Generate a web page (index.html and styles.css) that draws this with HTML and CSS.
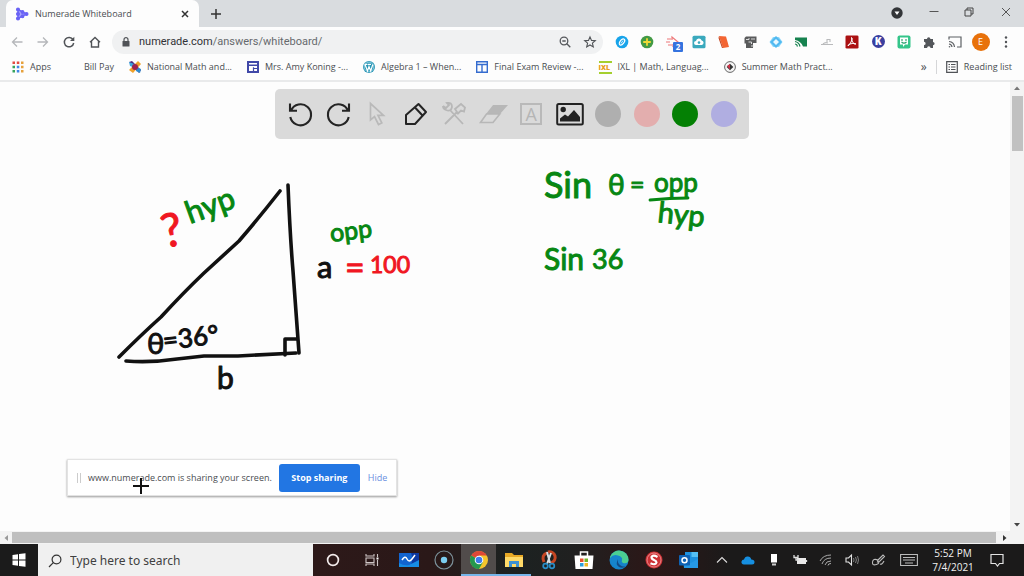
FILE: index.html
```html
<!DOCTYPE html>
<html lang="en">
<head>
<meta charset="utf-8">
<title>Numerade Whiteboard</title>
<link rel="stylesheet" href="styles.css">
</head>
<body>
<header class="browser">
  <div class="tabstrip">
    <div class="tab">
      <svg class="i14" viewBox="0 0 14 14"><g stroke="#6a63f5" stroke-width="1.5" fill="#6a63f5"><path d="M3 2.500 3 11.500 11.500 7Z" fill="#a9a5fb"/><circle cx="3" cy="2.500" r="1.300"/><circle cx="3" cy="7" r="1.300"/><circle cx="3" cy="11.500" r="1.300"/><circle cx="7.500" cy="5" r="1.200"/><circle cx="7.500" cy="9.300" r="1.200"/><circle cx="11.500" cy="7" r="1.300"/></g></svg>
      <span class="tab-title">Numerade Whiteboard</span>
      <button class="plain" aria-label="Close tab"><svg class="i10" viewBox="0 0 10 10"><path d="M2 2 8 8M8 2 2 8" stroke="#333" stroke-width="1.500"/></svg></button>
    </div>
    <button class="plain newtab" aria-label="New tab"><svg class="i10" viewBox="0 0 10 10"><path d="M5 0V10M0 5H10" stroke="#333" stroke-width="1.500"/></svg></button>
    <div class="window-controls">
      <button class="plain" aria-label="Tab search"><svg class="i12" viewBox="0 0 12 12"><circle cx="5" cy="7" r="5.700" fill="#333538"/><path d="M2.500 5.500h5L5 9Z" fill="#fff"/></svg></button>
      <button class="plain" aria-label="Minimize"><svg class="i10" viewBox="0 0 10 10"><path d="M.5 4.500H9.500" stroke="#555"/></svg></button>
      <button class="plain" aria-label="Restore"><svg class="i10" viewBox="0 0 10 10"><path d="M0 3h6v6H0ZM2 3V1h6v6H6" fill="none" stroke="#444"/></svg></button>
      <button class="plain" aria-label="Close"><svg class="i10" viewBox="0 0 10 10"><path d="M1 1 9 9M9 1 1 9" stroke="#555"/></svg></button>
    </div>
  </div>
  <div class="navbar">
    <div class="nav-buttons">
      <button class="plain" aria-label="Back"><svg class="i12" viewBox="0 0 12 12"><path d="M11.500 6H1.500M6 1.500 1.500 6 6 10.500" fill="none" stroke="#b5b7ba" stroke-width="1.300"/></svg></button>
      <button class="plain" aria-label="Forward"><svg class="i12" viewBox="0 0 12 12"><path d="M.5 6h10M6 1.500 10.500 6 6 10.500" fill="none" stroke="#b5b7ba" stroke-width="1.300"/></svg></button>
      <button class="plain" aria-label="Reload"><svg class="i12" viewBox="0 0 12 12"><path d="M10 3.500A4.700 4.700 0 1 0 10.700 7" fill="none" stroke="#505357" stroke-width="1.500"/><path d="M11.300.7V5H7Z" fill="#505357"/></svg></button>
      <button class="plain" aria-label="Home"><svg class="i12" viewBox="0 0 12 12"><path d="M1 6.300 6 1.500l5 4.800M2.500 5.300V11h7V5.300" fill="none" stroke="#505357" stroke-width="1.400"/></svg></button>
    </div>
    <div class="address">
      <svg class="i10" viewBox="0 0 10 10"><rect x="1.500" y="4" width="7" height="5.500" rx=".6" fill="#505357"/><path d="M3 4V2.700a2 2 0 0 1 4 0V4" fill="none" stroke="#505357" stroke-width="1.200"/></svg>
      <a class="url" href="#">numerade.com<span class="path">/answers/whiteboard/</span></a>
      <button class="plain" aria-label="Zoom"><svg class="i12" viewBox="0 0 12 12"><circle cx="5" cy="5" r="3.800" fill="none" stroke="#55585c" stroke-width="1.300"/><path d="M3.300 5h3.400M7.800 7.800l3.500 3.500" stroke="#55585c" stroke-width="1.300"/></svg></button>
      <button class="plain" aria-label="Bookmark"><svg class="i12" viewBox="0 0 12 12"><path d="M6 .9 7.500 4.400l3.800.3-2.900 2.500.9 3.700L6 9 2.700 10.900l.9-3.700L.7 4.700l3.800-.3Z" fill="none" stroke="#505357" stroke-width="1.100"/></svg></button>
    </div>
    <div class="extensions">
      <svg class="i14" viewBox="0 0 14 14"><circle cx="7" cy="7" r="6.300" fill="#18a4ea"/><ellipse cx="7" cy="7" rx="2" ry="3.600" transform="rotate(38 7 7)" fill="none" stroke="#fff" stroke-width="1.200"/><path d="M6 8.500 8 5.500" stroke="#d7f2ff"/></svg>
      <svg class="i14" viewBox="0 0 14 14"><circle cx="7" cy="7" r="6.300" fill="#439a45"/><path d="M7 3.200v7.600M3.200 7h7.600" stroke="#f0d934" stroke-width="1.800"/></svg>
      <span class="badged"><svg class="i14" viewBox="0 0 14 14"><path d="M1 4h4M0 7h4M2 10h4M6 5V2l6 5-5 4V9" fill="none" stroke="#ee7778" stroke-width="1.200"/></svg><span class="badge">2</span></span>
      <svg class="i14" viewBox="0 0 14 14"><rect x=".5" y=".7" width="13" height="12.600" rx="1.500" fill="#3aa9bd"/><path d="M4 10a2 2 0 0 1 0-4 3 3 0 0 1 5.700-.6A2.400 2.400 0 0 1 10 10Z" fill="#fff"/><circle cx="7" cy="7.600" r="1.300" fill="#3aa9bd"/></svg>
      <svg class="i14" viewBox="0 0 14 14"><path d="M2 1 9 1.500 12 12 6 13Z" fill="#f36532"/><path d="M2 1 6 13 5 13 1.500 3Z" fill="#c6421b"/></svg>
      <svg class="i14" viewBox="0 0 14 14"><path d="M3 1.500h10.500v6.500H10v5H3V8.500H1.500V3Z" fill="#5a5b5c"/><path d="M3 4.500h3V3M8 4h4M5.500 7h3v2M8 11h3" stroke="#e8e8e8" stroke-width=".9" fill="none"/></svg>
      <svg class="i14" viewBox="0 0 14 14"><path d="M4 2h6l3.500 5L10 12H4L.5 7Z" fill="#8bd7fb"/><path d="M7 1l6 6-6 6-6-6Z" fill="#51b9f0"/><path d="M7 4l3 3-3 3-3-3Z" fill="#e9f8ff"/></svg>
      <svg class="i14" viewBox="0 0 14 14"><path d="M1 2.500h12v9H9Q7 6 1 5Z" fill="#16824f"/><path d="M1 6.500q4 .7 5 5M1 9q2 .2 2.500 2.500" stroke="#16824f" stroke-width="1.200" fill="none"/></svg>
      <svg class="i14" viewBox="0 0 14 14"><path d="M1 9.500h12M3 9q2-2 5-1M7 7V4.500h3V7" fill="none" stroke="#b9babc" stroke-width="1.100"/></svg>
      <svg class="i14" viewBox="0 0 14 14"><rect x=".5" y=".5" width="13" height="13" rx="1.300" fill="#ab1112"/><path d="M6.500 2.500q1 0 .4 2.500Q6 8 3.200 11q-1-.6 1.500-1.900Q8 7.800 11 8.800q-.5 1-2.200-.2Q6.400 6.500 6.500 2.500" fill="none" stroke="#fff"/></svg>
      <span class="round k-badge">K</span>
      <svg class="i14" viewBox="0 0 14 14"><rect x=".5" y=".5" width="13" height="13" rx="2" fill="#35c58a"/><path d="M3 2.500h8v7H8L6 12V9.500H3Z" fill="#fff"/><path d="M5 4v2M9 4v2M4.500 7q2.500 2.300 5 0" stroke="#249e6b" stroke-width="1.100" fill="none"/></svg>
      <svg class="i14" viewBox="0 0 14 14"><path d="M2 4h3a1.700 1.700 0 1 1 3.400 0H11v3a1.600 1.600 0 1 1 0 3.200V13H8.500a1.700 1.700 0 0 0-3.400 0H2v-3a1.600 1.600 0 0 0 0-3.200Z" fill="#54575b"/></svg>
      <svg class="i14" viewBox="0 0 14 14"><path d="M1 4.500V2h12v10H9M1 6.500q5 .5 5.500 5.500M1 9q2.600.3 3 3" fill="none" stroke="#5d6064" stroke-width="1.200"/><circle cx="1.500" cy="11.800" r=".8" fill="#5d6064"/></svg>
      <button class="plain round avatar">E</button>
      <button class="plain" aria-label="Menu"><svg class="i14" viewBox="0 0 14 14" fill="#505357"><circle cx="7" cy="2.500" r="1.200"/><circle cx="7" cy="7" r="1.200"/><circle cx="7" cy="11.500" r="1.200"/></svg></button>
    </div>
  </div>
  <nav class="bookmarks">
    <a class="bm apps" href="#"><svg class="i12" viewBox="0 0 12 12"><path d="M.5.500h2.500v2.500H.5ZM4.800.500h2.500v2.500H4.800Z" fill="#e34b42"/><path d="M9 .500h2.500v2.500H9ZM9 4.800h2.500v2.500H9Z" fill="#e6a13c"/><path d="M.5 4.800h2.500v2.500H.5ZM.5 9h2.500v2.500H.5Z" fill="#38a35c"/><path d="M4.800 4.800h2.500v2.500H4.800ZM4.800 9h2.500v2.500H4.800Z" fill="#4187e8"/><path d="M9 9h2.500v2.500H9Z" fill="#e6a13c"/></svg><span>Apps</span></a>
    <a class="bm bill" href="#"><span>Bill Pay</span></a>
    <a class="bm" href="#"><svg class="i12" viewBox="0 0 12 12"><path d="M0 1 3 0 12 9 10 12Z" fill="#4b2e83"/><path d="M9 0 12 3 4 12 0 9Z" fill="#f0a22b"/><path d="M0 1 5 3 6 7 1 5Z" fill="#39a6e0"/><path d="M7 6 12 8 11 12 7 10Z" fill="#2e8cd0"/><circle cx="6" cy="6" r="3" fill="#9c2350"/></svg><span>National Math and...</span></a>
    <a class="bm" href="#"><svg class="i12" viewBox="0 0 12 12"><rect width="12" height="12" fill="#4048a8"/><path d="M2 2h8v1.500H2ZM2 5h8v5H2Z" fill="#fff"/><path d="M6.500 6.300V10M6.500 7.500H10" stroke="#4048a8" stroke-width="1.200"/></svg><span>Mrs. Amy Koning -...</span></a>
    <a class="bm" href="#"><svg class="i12" viewBox="0 0 12 12"><circle cx="6" cy="6" r="6" fill="#2795b5"/><circle cx="6" cy="6" r="4.800" fill="none" stroke="#bfe6f0" stroke-width=".6"/><path d="M2 3.500 4.500 10 6 5.500 7.700 10 9.800 3.500M1.500 3.300h3M5 3.300h3" fill="none" stroke="#fff" stroke-width="1.200"/></svg><span>Algebra 1 – When...</span></a>
    <a class="bm" href="#"><svg class="i12" viewBox="0 0 12 12"><path d="M.7.700h10.600v10.600H.7ZM.7 3.500h10.600M6 3.500V11" fill="none" stroke="#356ccf" stroke-width="1.400"/></svg><span>Final Exam Review -...</span></a>
    <a class="bm" href="#"><span class="ixl">IXL</span><span>IXL | Math, Languag...</span></a>
    <a class="bm" href="#"><svg class="i12" viewBox="0 0 12 12"><circle cx="6" cy="6" r="5.400" fill="#f5f5f5" stroke="#666"/><path d="M6 2.700 9.300 6 6 9.300 2.700 6Z" fill="#333"/><path d="M3 5 6 3v5.500Z" fill="#ce3349"/></svg><span>Summer Math Pract...</span></a>
    <button class="plain more">»</button>
    <a class="bm reading" href="#"><svg class="i12" viewBox="0 0 12 12"><path d="M.7.700h10.600v10.600H.7ZM2.500 3.500h1.500M5 3.500h4.500M2.500 6h1.500M5 6h4.500M2.500 8.500h1.500M5 8.500h4.500" fill="none" stroke="#505357" stroke-width="1.200"/></svg><span>Reading list</span></a>
  </nav>
</header>

<main class="viewport">
  <section class="stage">
    <div class="tools">
      <button class="plain" aria-label="Undo"><svg class="i26" viewBox="0 0 26 26"><path d="M4 9.500A10.500 10.500 0 1 1 3.300 16M3 2.500v7.200h7" fill="none" stroke="#242424" stroke-width="2.100"/></svg></button>
      <button class="plain" aria-label="Redo"><svg class="i26" viewBox="0 0 26 26"><path d="M22 9.500A10.500 10.500 0 1 0 22.700 16M23 2.500v7.200h-7" fill="none" stroke="#242424" stroke-width="2.100"/></svg></button>
      <button class="plain" aria-label="Select"><svg class="i26" viewBox="0 0 26 26"><path d="M6.500 2.500V19l4-3.500 4 8 3.300-1.600-3.800-7.600h5.500Z" fill="none" stroke="#b9b9b9" stroke-width="1.700"/></svg></button>
      <button class="plain" aria-label="Pen"><svg class="i26" viewBox="0 0 26 26"><path d="M3 23v-9L15.500 3 23 11 12 23ZM12 6.500 19.500 14.500" fill="none" stroke="#242424" stroke-width="2" stroke-linejoin="round"/></svg></button>
      <button class="plain" aria-label="Tools"><svg class="i26" viewBox="0 0 26 26"><path d="M4 23 16 11M14 8l6-5 4 3.500-1 4-3-1-3 3ZM8.500 8.500 22 23M2 5l3 2 3-3-2-2q5-1 5 4-1 5-6 3-3-1-3-4" fill="none" stroke="#b7b7b7" stroke-width="1.800"/></svg></button>
      <button class="plain" aria-label="Eraser"><svg class="i26" viewBox="0 0 26 26"><path d="M13 4h15l-8 9H6Z" fill="#b7b7b7"/><path d="M6.500 13h13.300L13 21.500H.5Z" fill="none" stroke="#b7b7b7" stroke-width="1.600"/></svg></button>
      <button class="plain" aria-label="Text"><span class="letter-box">A</span></button>
      <button class="plain" aria-label="Image"><svg class="i28" viewBox="0 0 28 26"><rect x="1.200" y="3" width="25.600" height="20.500" rx="1.500" fill="none" stroke="#222" stroke-width="2"/><circle cx="7.200" cy="8.500" r="2.700" fill="#222"/><path d="M4 20.500v-3l5-4 3 2 6-6.500 6 7v4.500Z" fill="#222"/></svg></button>
      <button class="plain" aria-label="Gray"><span class="swatch gray"></span></button>
      <button class="plain" aria-label="Pink"><span class="swatch pink"></span></button>
      <button class="plain" aria-label="Green"><span class="swatch green"></span></button>
      <button class="plain" aria-label="Violet"><span class="swatch violet"></span></button>
    </div>
    <svg class="board" viewBox="0 139 1010 320" preserveAspectRatio="xMinYMin meet">
      <g fill="none" stroke="#111" stroke-width="3.600" stroke-linecap="round" stroke-linejoin="round">
        <path d="M280 191 Q258 219 239 241 L204 273 Q184 292 161 317 Q141 335 119 357"/>
        <path d="M288 185 Q290 235 293 271 L299 353"/>
        <path d="M126 361 Q150 363 177 359 L204 356 238 356 296 353"/>
        <path d="M285 355V339H297"/>
      </g>
      <g class="ink red">
        <text x="165" y="248" font-size="46" transform="rotate(-12 165 248)">?</text>
        <text x="345" y="280" font-size="34">=</text>
        <text x="370" y="273" font-size="23">100</text>
      </g>
      <g class="ink green-ink">
        <text x="190" y="224" font-size="31" transform="rotate(-20 190 224)">hyp</text>
        <text x="331" y="242" font-size="25" transform="rotate(-7 331 242)">opp</text>
        <text x="544" y="198" font-size="36">Sin</text>
        <text x="608" y="195" font-size="28">θ</text>
        <text x="630" y="194" font-size="25">=</text>
        <text x="654" y="192" font-size="26">opp</text>
        <text x="657" y="222" font-size="29" transform="rotate(6 657 222)">hyp</text>
        <text x="544" y="270" font-size="30">Sin</text>
        <text x="592" y="269" font-size="27">36</text>
      </g>
      <path d="M650 200Q670 198 688 198" fill="none" stroke="#078713" stroke-width="2.800" stroke-linecap="round"/>
      <g class="ink">
        <text x="317" y="278" font-size="31">a</text>
        <text x="147" y="354" font-size="29">θ</text>
        <text x="164" y="350" font-size="26" transform="rotate(-7 164 350)">=36°</text>
        <text x="217" y="389" font-size="30">b</text>
      </g>
    </svg>
    <div class="share">
      <span class="grip"></span>
      <span class="share-text">www.numerade.com is sharing your screen.</span>
      <button class="stop">Stop sharing</button>
      <a class="hide" href="#">Hide</a>
      <svg class="cursor" viewBox="0 0 16 16"><path d="M8 0V16M0 8H16" stroke="#111" stroke-width="2"/></svg>
    </div>
  </section>
  <div class="vscroll"><svg class="arrow" viewBox="0 0 12 12"><path d="M3 8 6 4.500 9 8Z" fill="#777"/></svg><div class="vthumb"></div><svg class="arrow end" viewBox="0 0 12 12"><path d="M3 4 6 7.500 9 4Z" fill="#444"/></svg></div>
</main>
<div class="hscroll"><svg class="arrow" viewBox="0 0 12 12"><path d="M8 3 4.500 6 8 9Z" fill="#999"/></svg><div class="hthumb"></div><svg class="arrow" viewBox="0 0 12 12"><path d="M4 3 7.500 6 4 9Z" fill="#333"/></svg></div>

<footer class="taskbar">
  <button class="plain start" aria-label="Start"><svg class="i14" viewBox="0 0 14 14" fill="#fff"><path d="M.5 2 6 1.200V6.500H.5ZM7 1 13.500.2V6.500H7ZM.5 7.500H6v5.300L.5 12ZM7 7.500h6.500v6.300L7 13Z"/></svg></button>
  <label class="search"><svg class="i14" viewBox="0 0 14 14"><circle cx="8.500" cy="5.500" r="4.400" fill="none" stroke="#333" stroke-width="1.200"/><path d="M5.300 8.700 1 13" stroke="#333" stroke-width="1.200"/></svg><input type="text" placeholder="Type here to search" aria-label="Type here to search"></label>
  <div class="system">
    <button class="plain" aria-label="Cortana"><svg class="i14" viewBox="0 0 14 14"><circle cx="7" cy="7" r="5.400" fill="none" stroke="#f2eaea" stroke-width="1.700"/></svg></button>
    <button class="plain" aria-label="Task view"><svg class="i14" viewBox="0 0 14 14"><path d="M1 1v2h8V1M1 13v-2h8v2M1 5h8v4.500H1ZM12.500 1v3M12.500 7v6" fill="none" stroke="#cfc6c6" stroke-width="1.100"/><path d="M11.500 4.500h2v2h-2Z" fill="#fff"/></svg></button>
  </div>
  <div class="apps-row">
    <button class="plain" aria-label="Whiteboard"><svg class="i20" viewBox="0 0 20 20"><rect y="3" width="20" height="14" fill="#1264cf"/><path d="M12 3h8v14h-9q4-7 1-14" fill="#0d38a0"/><path d="M0 13q5 3 10 2l10-5v7H0Z" fill="#178ce4"/><path d="M3 10q3-5 5-1t5 0l3-4" fill="none" stroke="#fff" stroke-width="1.500"/></svg></button>
    <button class="plain" aria-label="Recorder"><svg class="i20" viewBox="0 0 20 20"><circle cx="10" cy="10" r="9" fill="none" stroke="#7c929b" stroke-width="1.200"/><circle cx="10" cy="10" r="3.200" fill="#7ccdf0"/></svg></button>
    <button class="plain active" aria-label="Chrome"><svg class="i20" viewBox="0 0 20 20"><circle cx="10" cy="10" r="9" fill="#f4c52d"/><path d="M10 10 2.200 5.500A9 9 0 0 1 17.800 5.500H10Z" fill="#de4837"/><path d="M10 10 2.200 5.500A9 9 0 0 0 10 19l4-7Z" fill="#25984e"/><circle cx="10" cy="10" r="4.300" fill="#fff"/><circle cx="10" cy="10" r="3.300" fill="#3e7bec"/></svg></button>
    <button class="plain running" aria-label="File Explorer"><svg class="i20" viewBox="0 0 20 20"><path d="M1 3h7l2 2h9v12H1Z" fill="#e8a925"/><path d="M1 7h18v10H1Z" fill="#ffda68"/><path d="M5 11h10v6h-3v-3H8v3H5Z" fill="#3d91d3"/></svg></button>
    <button class="plain" aria-label="Snip"><svg class="i20" viewBox="0 0 20 20"><path d="M9 2a5.500 5.500 0 0 1 3 11M8 3Q2 5 5 12" fill="none" stroke="#c64623" stroke-width="3"/><path d="M8 2 11 13M12 3 8 14" stroke="#d9dfe3" stroke-width="2"/><circle cx="6.500" cy="16" r="2.300" fill="none" stroke="#298dc7" stroke-width="1.700"/><circle cx="13" cy="16" r="2.300" fill="none" stroke="#298dc7" stroke-width="1.700"/></svg></button>
    <button class="plain" aria-label="Store"><svg class="i20" viewBox="0 0 20 20"><path d="M6.500 6V2h7v4" fill="none" stroke="#fff" stroke-width="1.500"/><path d="M.5 5.500h19L18.500 19h-17Z" fill="#fff"/><path d="M6 8.500h3.500V12H6Z" fill="#e8502d"/><path d="M10.500 8.500H14V12h-3.500Z" fill="#72b52b"/><path d="M6 13h3.500v3.500H6Z" fill="#2b9fdc"/><path d="M10.500 13H14v3.500h-3.500Z" fill="#efb727"/></svg></button>
    <button class="plain" aria-label="Edge"><svg class="i20" viewBox="0 0 20 20"><circle cx="10" cy="10" r="9.500" fill="#1683ca"/><path d="M1 7A9.500 9.500 0 0 1 19.500 10q-.5 4-5.500 3-2-1-1-3-1-4-6-3.500Q3 7 1 11Z" fill="#4bcf92"/><path d="M1 8Q4 4 9 5.500T13 10q-4-1.500-4.500 2 .5 5 8 4A9.500 9.500 0 0 1 1 8Z" fill="#1685cd"/><path d="M9 9Q6 14 10 17q4 2 7-1-3 1.500-6-1T9 9Z" fill="#124b86"/></svg></button>
    <button class="plain" aria-label="Snagit"><svg class="i20" viewBox="0 0 20 20"><circle cx="10" cy="10" r="8.500" fill="#cb3135"/><circle cx="10" cy="10" r="7" fill="none" stroke="#ed8587"/><path d="M13.500 7q-4.500-2.500-6 0 0 2 2.500 3t2.500 2.500q-1 3-6 .8" fill="none" stroke="#fff" stroke-width="2.200"/></svg></button>
    <button class="plain" aria-label="Outlook"><svg class="i20" viewBox="0 0 20 20"><path d="M6 2h13v11H6Z" fill="#1d91df"/><path d="M12.500 2H19v5h-6.500Z" fill="#54c0f5"/><path d="M4 9l8 4 7-4v9H5Z" fill="#2699e6"/><rect y="5" width="11" height="10.500" rx="1" fill="#0f62b4"/><circle cx="5.500" cy="10.200" r="2.500" fill="none" stroke="#fff" stroke-width="1.500"/></svg></button>
  </div>
  <div class="tray">
    <button class="plain" aria-label="Show hidden icons"><svg class="i14" viewBox="0 0 14 14"><path d="M2 9.500 7 4.500l5 5" fill="none" stroke="#ddd" stroke-width="1.100"/></svg></button>
    <svg class="i14" viewBox="0 0 14 14"><path d="M3 11.500Q0 11 .5 8.500 1 6.500 3 6.500 4 3 7 3.500q2.500 0 3.300 3 3.200 0 3.200 2.500t-2.500 2.500Z" fill="#168fe0"/></svg>
    <svg class="i14" viewBox="0 0 14 14"><path d="M4 1h6v8.500H4Z" fill="#fff"/><path d="M5 10.500h4v2H5Z" fill="#ccc"/></svg>
    <svg class="i14" viewBox="0 0 14 14"><path d="M4 5h9v6H4Z" fill="#e9e9e9"/><path d="M1 2v2.500h4V2M3 4.500V7h3M13.500 7v2" fill="none" stroke="#ddd" stroke-width="1.300"/></svg>
    <svg class="i14" viewBox="0 0 14 14"><g fill="none" stroke="#aaa"><path d="M1 8Q4 2 12 2M3 11Q5 5 12 5M6 12Q7 8 12 8"/><path d="M9 12.500q0-2 3-2"/></g></svg>
    <svg class="i14" viewBox="0 0 14 14"><path d="M1 5h2.500L6.500 2v10L3.500 9H1Z" fill="none" stroke="#e2e2e2" stroke-width="1.100"/><path d="M8.500 5q1 2 0 4M10.500 4q1.800 3 0 6M12.500 3q2 4 0 8" fill="none" stroke="#999" stroke-width=".8"/></svg>
    <svg class="i14" viewBox="0 0 14 14"><path d="M7 7l5-5 1.500 1.500-5 5-2 .5ZM7 7Q2 5 1.500 9t4 2.500T6 7M9 11q2 1 4-3" fill="none" stroke="#bbb" stroke-width="1.100"/></svg>
    <svg class="i18" viewBox="0 0 18 14"><path d="M.6 1.500h16.800v11H.6ZM3 4.500h12M3 7h12M5 10h8" fill="none" stroke="#bbb" stroke-width="1.100"/></svg>
    <div class="clock"><span>5:52 PM</span><span>7/4/2021</span></div>
    <button class="plain note" aria-label="Notifications"><svg class="i14" viewBox="0 0 14 14"><path d="M1 1.500h12v9H9.500L7.500 13 5.500 10.500H1Z" fill="none" stroke="#e4e4e4" stroke-width="1.200"/></svg></button>
  </div>
</footer>
</body>
</html>
```
FILE: styles.css
```css
* { box-sizing: border-box; }
body {
  margin: 0;
  min-height: 100vh;
  display: flex;
  flex-direction: column;
  background: #fdfdfd;
  font-family: "Open Sans", "Noto Sans", sans-serif;
  font-size: 9px;
  line-height: 14px;
  color: #4a4d51;
}
a { color: inherit; text-decoration: none; }
svg { display: block; flex: none; overflow: visible; }
.plain {
  display: flex;
  align-items: center;
  justify-content: center;
  padding: 0;
  border: 0;
  background: none;
  font: inherit;
  color: inherit;
}
.i10 { width: 10px; height: 10px; }
.i12 { width: 12px; height: 12px; }
.i14 { width: 14px; height: 14px; }
.i18 { width: 18px; height: 14px; }
.i20 { width: 20px; height: 20px; }
.i26 { width: 26px; height: 26px; }
.i28 { width: 28px; height: 26px; }

/* Browser frame */
.tabstrip { display: flex; height: 27px; background: #d9dcdf; }
.tab {
  display: flex;
  align-items: center;
  gap: 6px;
  width: 193px;
  margin-left: 6px;
  padding: 0 9px;
  border-radius: 7px 7px 0 0;
  background: #fdfdfd;
}
.tab-title { flex: 1; white-space: nowrap; }
.newtab { margin-left: 12px; }
.window-controls {
  display: grid;
  grid-template-columns: repeat(4, 36px);
  margin-left: auto;
  padding-bottom: 3px;
}
.navbar { display: flex; align-items: center; height: 29px; padding: 0 5px 0 4px; }
.nav-buttons { display: grid; grid-template-columns: repeat(4, 26px); margin-right: 4px; }
.address {
  display: flex;
  flex: 1;
  align-items: center;
  gap: 13px;
  height: 24px;
  padding: 0 7px 0 9px;
  border-radius: 12px;
  background: #f0f1f2;
}
.url {
  flex: 1;
  margin-left: -5px;
  color: #303236;
  font-family: Roboto, "Open Sans", sans-serif;
  font-size: 11px;
  line-height: 16px;
}
.path { color: #66696d; }
.extensions {
  display: grid;
  grid-template-columns: repeat(16, 1fr);
  flex: 0 0 410px;
  place-items: center;
  margin-left: 6px;
}
.badged { position: relative; }
.badge {
  position: absolute;
  left: 7px;
  top: 7px;
  width: 10px;
  height: 10px;
  border-radius: 1px;
  background: #3573df;
  color: #fff;
  font-size: 8px;
  font-weight: 700;
  line-height: 10px;
  text-align: center;
}
.round { width: 13px; height: 13px; border-radius: 50%; color: #fff; text-align: center; }
.k-badge { background: #3b3f9f; font-size: 10px; font-weight: 800; line-height: 13px; }
.avatar { width: 18px; height: 18px; background: #e8710a; }
.bookmarks {
  display: flex;
  align-items: center;
  gap: 15px;
  height: 26px;
  padding: 0 12px 2px;
  border-bottom: 2px solid #e9eaeb;
  white-space: nowrap;
}
.bm { display: flex; align-items: center; gap: 6px; }
.bill { margin-left: 18px; }
.ixl {
  width: 13px;
  height: 13px;
  border: solid #a5cf2e;
  border-width: 2px 0;
  color: #e89c20;
  font-size: 7px;
  font-weight: 800;
  line-height: 9px;
}
.more { margin-left: auto; margin-right: -6px; font-size: 12px; }
.reading { padding-left: 9px; border-left: 1px solid #d5d6d8; }

/* Whiteboard */
.viewport { display: flex; flex: 1; }
.stage { display: flex; flex: 1; flex-direction: column; min-width: 0; padding-top: 7px; }
.tools {
  display: grid;
  grid-template-columns: repeat(12, 1fr);
  align-self: center;
  width: 474px;
  height: 50px;
  margin-left: 14px;
  padding: 0 6px;
  border-radius: 5px;
  background: #dadada;
}
.letter-box {
  width: 22px;
  height: 22px;
  border: 2px solid #b9b9b9;
  color: #b5b5b5;
  font-size: 18px;
  line-height: 18px;
  text-align: center;
}
.swatch { width: 26px; height: 26px; border-radius: 50%; }
.gray { background: #afafaf; }
.pink { background: #e3aeae; }
.green { background: #048004; }
.violet { background: #b0aee1; }
.board { width: 100%; flex: 1; min-height: 0; }
.ink {
  fill: #111;
  stroke: #111;
  stroke-width: 1px;
  stroke-linejoin: round;
  font-family: Lato, sans-serif;
}
.red { fill: #f01722; stroke: #f01722; }
.green-ink { fill: #078713; stroke: #078713; }
.share {
  position: relative;
  display: flex;
  align-items: center;
  align-self: flex-start;
  height: 37px;
  margin: 0 0 35px 67px;
  padding: 0 9px;
  border: 1px solid #e3e3e3;
  background: #fff;
  box-shadow: 0 1px 2px #999;
}
.grip { width: 4px; height: 10px; margin-right: 7px; border: solid #ccc; border-width: 0 1px; }
.stop {
  width: 81px;
  height: 28px;
  margin: 0 8px 0 7px;
  padding: 0;
  border: 0;
  border-radius: 3px;
  background: #2276e3;
  color: #fff;
  font: 700 9px/14px "Open Sans", sans-serif;
}
.hide { color: #6a8fe0; }
.cursor { position: absolute; left: 65px; top: 18px; width: 16px; height: 16px; }

/* Scrollbars */
.vscroll { display: flex; flex-direction: column; width: 14px; align-items: center; background: #f3f3f3; }
.arrow { width: 12px; height: 12px; }
.vthumb { width: 11px; height: 55px; margin-top: 2px; background: #c1c1c1; }
.end { margin-top: auto; }
.hscroll { display: flex; align-items: center; height: 13px; padding-right: 13px; background: #f3f3f3; }
.hthumb { flex: 1; height: 11px; margin-right: 3px; background: #bfbfbf; }

/* Taskbar */
.taskbar {
  display: flex;
  height: 32px;
  background: linear-gradient(90deg, #1b1b1b 4%, #2d1919 31%, #2a1818 42%, #1c2221 50%, #202020 56%, #2c1717 64%, #1b1a1a 71%);
  color: #f1f1f1;
}
.start { width: 38px; }
.search { display: flex; align-items: center; gap: 8px; flex: 0 1 275px; padding: 2px 10px 0; background: #f0f0f0; }
.search input {
  flex: 1;
  min-width: 0;
  padding: 0;
  border: 0;
  background: none;
  font: 12px/16px "Noto Sans", sans-serif;
}
.search input::placeholder { color: #404040; opacity: 1; }
.system { display: grid; grid-template-columns: repeat(2, 39px); }
.apps-row { display: grid; grid-template-columns: repeat(9, 35px); }
.active { background: #514c4b; border-bottom: 2px solid #76b5e9; padding-top: 2px; }
.running { border-bottom: 2px solid #76b5e9; padding-top: 2px; }
.tray {
  display: grid;
  grid-template-columns: repeat(7, 26px) 36px 52px 36px;
  flex: 1;
  justify-content: end;
  align-items: center;
  justify-items: center;
  padding-right: 9px;
}
.clock {
  display: flex;
  flex-direction: column;
  font-size: 10px;
  text-align: center;
  white-space: nowrap;
}
```
